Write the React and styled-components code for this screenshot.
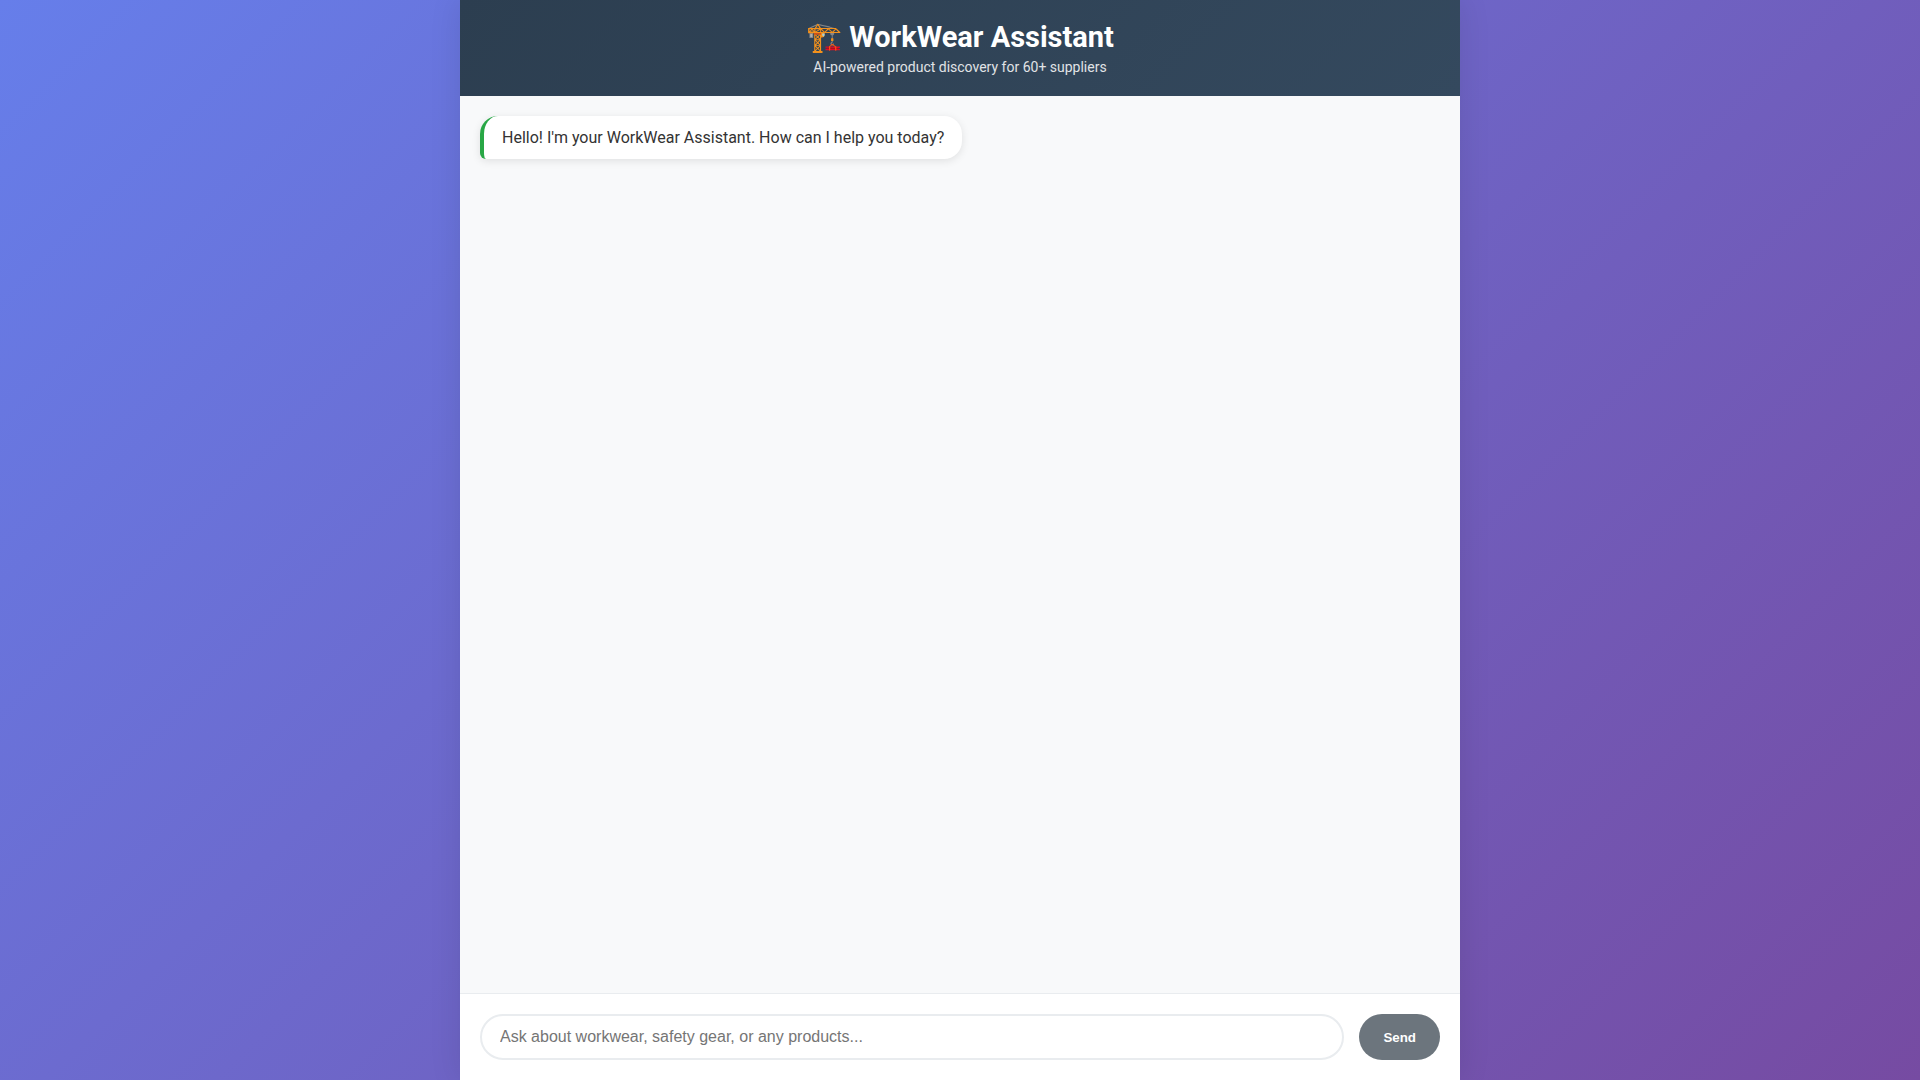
import React, { useState } from 'react';
import styled, { createGlobalStyle } from 'styled-components';

const GlobalStyle = createGlobalStyle`
  * {
    margin: 0;
    padding: 0;
    box-sizing: border-box;
  }

  body {
    font-family: Roboto, sans-serif;
    background: linear-gradient(135deg, #667eea 0%, #764ba2 100%);
    min-height: 100vh;
  }
`;

const ChatContainer = styled.main`
  display: flex;
  flex-direction: column;
  max-width: 1000px;
  height: 100vh;
  margin: 0 auto;
  background: #ffffff;
  box-shadow: 0 0 30px rgba(0, 0, 0, 0.1);
`;

const Header = styled.header`
  padding: 20px;
  text-align: center;
  color: #ffffff;
  background: linear-gradient(135deg, #2c3e50 0%, #34495e 100%);
`;

const Title = styled.h1`
  font-size: 29px;
  line-height: 34px;
  margin-bottom: 5px;
`;

const Subtitle = styled.p`
  font-size: 14px;
  line-height: 17px;
  opacity: 0.85;
`;

const Messages = styled.section`
  display: flex;
  flex: 1;
  flex-direction: column;
  align-items: flex-start;
  gap: 15px;
  padding: 20px;
  overflow-y: auto;
  background: #f8f9fa;
`;

const Message = styled.div`
  max-width: 80%;
  padding: 12px 18px;
  font-size: 16px;
  line-height: 19px;
  color: #333333;
  background: #ffffff;
  border-left: 4px solid #28a745;
  border-radius: 18px 18px 18px 6px;
  box-shadow: 0 2px 8px rgba(0, 0, 0, 0.1);
`;

const InputArea = styled.form`
  display: flex;
  gap: 15px;
  padding: 20px;
  background: #ffffff;
  border-top: 1px solid #e9ecef;
`;

const ChatInput = styled.input`
  flex: 1;
  min-width: 0;
  padding: 12px 18px;
  font-family: 'Liberation Sans', sans-serif;
  font-size: 16px;
  border: 2px solid #e9ecef;
  border-radius: 25px;
  outline: none;

  &:focus {
    border-color: #667eea;
  }
`;

const SendButton = styled.button`
  padding: 12px 24px;
  font-family: 'Liberation Sans', sans-serif;
  font-weight: bold;
  color: #ffffff;
  background: #6c757d;
  border: none;
  border-radius: 25px;
  cursor: pointer;
`;

const App = () => {
  const [text, setText] = useState('');
  const [messages, setMessages] = useState([
    "Hello! I'm your WorkWear Assistant. How can I help you today?"
  ]);

  const handleSubmit = (event) => {
    event.preventDefault();
    if (!text.trim()) return;
    setMessages([...messages, text.trim()]);
    setText('');
  };

  return (
    <>
      <GlobalStyle />
      <ChatContainer>
        <Header>
          <Title>🏗️ WorkWear Assistant</Title>
          <Subtitle>AI-powered product discovery for 60+ suppliers</Subtitle>
        </Header>
        <Messages>
          {messages.map((message, index) => (
            <Message key={index}>{message}</Message>
          ))}
        </Messages>
        <InputArea onSubmit={handleSubmit}>
          <ChatInput
            type="text"
            aria-label="Message"
            placeholder="Ask about workwear, safety gear, or any products..."
            value={text}
            onChange={(event) => setText(event.target.value)}
          />
          <SendButton type="submit">Send</SendButton>
        </InputArea>
      </ChatContainer>
    </>
  );
};

export default App;
